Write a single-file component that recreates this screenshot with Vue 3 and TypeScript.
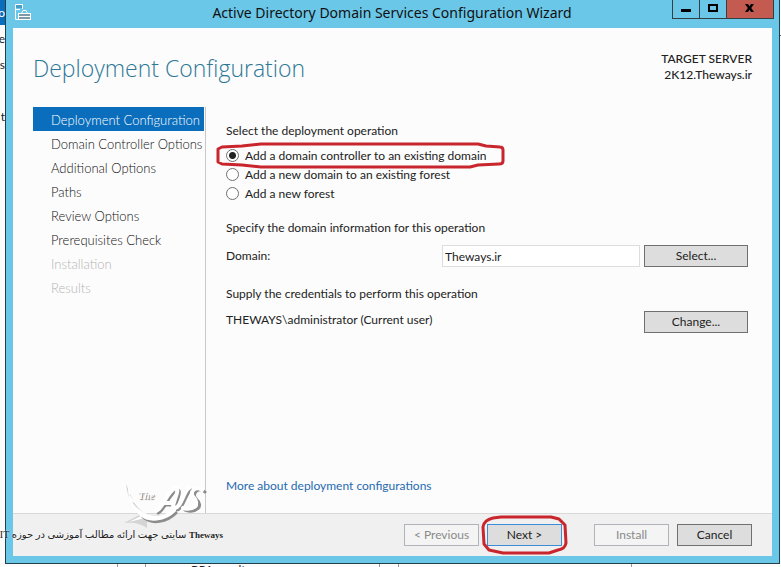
<script setup lang="ts">
import { ref } from 'vue'

interface Step {
  label: string
  disabled?: boolean
}

const steps: Step[] = [
  { label: 'Deployment Configuration' },
  { label: 'Domain Controller Options' },
  { label: 'Additional Options' },
  { label: 'Paths' },
  { label: 'Review Options' },
  { label: 'Prerequisites Check' },
  { label: 'Installation', disabled: true },
  { label: 'Results', disabled: true },
]
const current = ref(0)

const operations: string[] = [
  'Add a domain controller to an existing domain',
  'Add a new domain to an existing forest',
  'Add a new forest',
]
const operation = ref(0)
const domain = ref('Theways.ir')
</script>

<template>
  <div class="desktop">
    <div class="behind-left" aria-hidden="true">
      <span class="behind-active">ro</span>
      <span class="behind-a">ve</span>
      <span class="behind-b">s</span>
      <span class="behind-c">t</span>
    </div>
    <section class="window">
      <header class="titlebar">
        <svg class="app-icon" width="17" height="17" viewBox="0 0 17 17" fill="none" stroke="#fff">
          <path d="M1 1H7V4H1Z" fill="#4a9cc4" stroke="none" />
          <path d="M3 15.500H.5V.5H7.500V5M.5 5.500H5" />
          <rect x="3.500" y="9.500" width="12" height="6" fill="#7f9aa6" />
          <path d="M6.500 9.500L8 6.500H11L12.500 9.500M3.500 12.500H15.500" />
        </svg>
        <h1>Active Directory Domain Services Configuration Wizard</h1>
        <div class="caption-buttons">
          <button type="button" aria-label="Minimize">
            <svg width="10" height="12" viewBox="0 0 10 12"><path d="M0 9H10V12H0Z" /></svg>
          </button>
          <button type="button" aria-label="Maximize">
            <svg width="10" height="12" viewBox="0 0 10 12"><path fill-rule="evenodd" d="M0 4H10V12H0ZM2 6V10H8V6Z" /></svg>
          </button>
          <button type="button" class="close" aria-label="Close">
            <svg width="10" height="12" viewBox="0 0 10 12"><path d="M0 4H3L4.500 6.300L6 4H9L6.200 8L9 12H6L4.500 9.700L3 12H0L2.800 8Z" /></svg>
          </button>
        </div>
      </header>

      <div class="client">
        <div class="heading">
          <h2>Deployment Configuration</h2>
          <p class="target">TARGET SERVER<br />2K12.Theways.ir</p>
        </div>

        <div class="body">
          <nav class="steps">
            <button
              v-for="(step, i) in steps"
              :key="step.label"
              type="button"
              :disabled="step.disabled"
              :class="{ active: current === i }"
              @click="current = i"
            >
              {{ step.label }}
            </button>
          </nav>

          <main class="page">
            <fieldset>
              <legend>Select the deployment operation</legend>
              <label v-for="(op, i) in operations" :key="op" class="radio">
                <input v-model="operation" type="radio" name="operation" :value="i" />
                <span>{{ op }}</span>
                <svg v-if="i === 0" class="mark" width="289" height="28" viewBox="0 0 289 28" fill="none" stroke="#c9252c" stroke-width="3" stroke-linejoin="round">
                  <path d="M6 5L26 4L45 2H262L270 4L284 5Q287 5 287 8V19Q287 22 283 22L262 23L254 25H45L26 23L6 22L2 20V7Z" />
                </svg>
              </label>
            </fieldset>

            <p class="line">Specify the domain information for this operation</p>
            <div class="row domain-row">
              <label for="domain">Domain:</label>
              <input id="domain" v-model="domain" type="text" />
              <button type="button" class="btn wide">Select...</button>
            </div>

            <p class="line">Supply the credentials to perform this operation</p>
            <div class="row credentials-row">
              <span>THEWAYS\administrator (Current user)</span>
              <button type="button" class="btn wide">Change...</button>
            </div>

            <a class="more" href="#more">More about deployment configurations</a>
          </main>
        </div>

        <footer class="actions">
          <button type="button" class="btn" disabled>&lt; Previous</button>
          <div class="marked">
            <button type="button" class="btn primary">Next &gt;</button>
            <svg class="mark-next" width="87" height="40" viewBox="0 0 87 40" fill="none" stroke="#c9252c" stroke-width="3" stroke-linejoin="round">
              <path d="M12 3L20 2H70L78 4L84 10L85 28Q84 34 77 35L68 38H22L8 35L3 29L2 12Q3 5 12 3Z" />
            </svg>
          </div>
          <button type="button" class="btn install" disabled>Install</button>
          <button type="button" class="btn">Cancel</button>
        </footer>
      </div>
    </section>

    <div class="behind-right" aria-hidden="true"></div>
    <div class="behind-bottom" aria-hidden="true">
      <span class="cell gap"></span>
      <span class="cell">BPA results</span>
      <span class="cell gap"></span>
      <span class="cell"></span>
    </div>

    <div class="watermark">
      <svg width="84" height="50" viewBox="0 0 84 50" fill="none" stroke-linecap="round" stroke-linejoin="round">
        <path fill="#d4d4d4" d="M3 2C5 17 9 25 18 32L1 41C12 40 18 42 24 46L24 38C40 42 48 35 52 27C40 35 29 36 20 30C9 22 8 12 3 2Z" />
        <path fill="#fff" d="M5 4L8 13L6 12L12 21L9 20C13 26 18 29 22 31C33 37 44 33 50 29C43 40 28 39 22 36L6 40L18 34C8 27 5 17 5 4Z" />
        <g stroke="#8c8c8c" stroke-width="3" transform="translate(2 1)">
          <path d="M33 30C40 28 44 9 53 7C58 8 47 26 51 27C58 28 61 9 66 7M80 9C74 3 65 11 72 17C79 23 71 31 60 27M38 22H50M18 34C27 42 42 39 51 30" />
        </g>
        <g stroke="#fff" stroke-width="4">
          <path d="M33 29C40 27 44 8 53 6C58 7 47 25 51 26C58 27 61 8 66 6M79 8C73 3 65 10 71 16C77 22 70 29 60 26M38 21H50M18 32C27 40 42 37 51 28" />
        </g>
      </svg>
      <span class="the">The</span>
      <p dir="rtl"><bdi>Theways</bdi> سایتی جهت ارائه مطالب آموزشی در حوزه IT</p>
    </div>
  </div>
</template>

<style>
body {
  margin: 0;
}
</style>

<style scoped>
.desktop {
  position: relative;
  display: flex;
  min-height: 100vh;
  box-sizing: border-box;
  padding: 0 1px 3px 5px;
  overflow: hidden;
  background: #fcfcfc;
  color: #222;
  font: 12px/16px Lato, "Open Sans", sans-serif;
}
h1,
h2,
p,
fieldset {
  margin: 0;
  padding: 0;
  border: 0;
  font-weight: 400;
}
button,
input {
  font: inherit;
  color: inherit;
}
.window {
  display: flex;
  flex: 1;
  flex-direction: column;
  border: solid #243f4c;
  border-width: 0 1px 1px;
  padding: 0 7px 7px;
  background: #6bc7e8;
}
.titlebar {
  display: flex;
  align-items: flex-start;
  height: 28px;
}
.app-icon {
  flex: none;
  margin: 4px 0 0 2px;
}
.titlebar h1 {
  flex: 1;
  padding-left: 80px;
  font-family: "Noto Sans", sans-serif;
  font-size: 14px;
  line-height: 26px;
  text-align: center;
  color: #111;
}
.caption-buttons {
  display: flex;
  height: 18px;
  margin-right: -2px;
  border: solid #333f45;
  border-width: 0 1px 1px;
}
.caption-buttons button {
  display: flex;
  justify-content: center;
  width: 27px;
  padding: 0;
  border: 0;
  border-right: 1px solid #333f45;
  background: none;
}
.caption-buttons .close {
  width: 46px;
  border-right: 0;
  background: #c35b50;
}
.client {
  display: flex;
  flex: 1;
  flex-direction: column;
  background: #fcfcfc;
}
.heading {
  display: flex;
  justify-content: space-between;
  padding: 23px 20px 0;
}
.heading h2 {
  font-family: "Open Sans", sans-serif;
  font-size: 23px;
  line-height: 34px;
  font-weight: 300;
  color: #2e7897;
}
.target {
  text-align: right;
  font-weight: 500;
}
.body {
  display: flex;
  flex: 1;
  padding: 22px 20px 0;
}
.steps {
  display: flex;
  flex-direction: column;
  flex: none;
  width: 172px;
  border-right: 1px solid #c8c8c8;
}
.steps button {
  height: 24px;
  margin-right: 1px;
  padding: 2px 0 0 18px;
  border: 0;
  background: none;
  text-align: left;
  white-space: nowrap;
  font-size: 13px;
  line-height: 18px;
  font-weight: 300;
  color: #111;
}
.steps button.active {
  background: #0a6ebd;
  color: #fff;
}
.steps button:disabled {
  color: #b4b4b4;
}
.page {
  display: flex;
  flex: 1;
  flex-direction: column;
  padding: 16px 4px 19px 20px;
}
legend {
  padding: 0;
  margin-bottom: 7px;
}
.radio {
  position: relative;
  display: flex;
  align-items: center;
  gap: 6px;
  height: 19px;
}
.radio input {
  appearance: none;
  width: 13px;
  height: 13px;
  margin: 0;
  border: 1px solid #707070;
  border-radius: 50%;
  background: #fff;
}
.radio input:checked {
  background: radial-gradient(circle, #222 0 3px, #fff 4px);
}
.mark {
  position: absolute;
  left: -10px;
  top: -4px;
}
.line {
  margin-top: 17px;
}
.row {
  display: flex;
  align-items: center;
  gap: 4px;
}
.domain-row {
  margin-top: 9px;
}
.domain-row label {
  flex: 1;
}
.domain-row input {
  box-sizing: border-box;
  width: 198px;
  height: 22px;
  padding: 0 2px;
  border: 1px solid #ddd;
  background: #fff;
}
.domain-row + .line {
  margin-top: 19px;
}
.credentials-row {
  align-items: flex-start;
  justify-content: space-between;
  margin-top: 9px;
}
.credentials-row span {
  padding-top: 1px;
}
.btn {
  box-sizing: border-box;
  width: 75px;
  height: 22px;
  padding: 0;
  border: 1px solid #707070;
  background: #ddd;
}
.btn.wide {
  width: 104px;
}
.btn:disabled {
  border-color: #b0b4b8;
  background: #f4f4f4;
  color: #8a8a8a;
}
.btn.primary {
  border-color: #3c8cd8;
}
.more {
  align-self: flex-start;
  margin-top: auto;
  color: #1f6ab0;
  text-decoration: none;
}
.actions {
  display: flex;
  justify-content: flex-end;
  gap: 8px;
  padding: 10px 20px;
  border-top: 1px solid #d8d8d8;
  background: #f0f0f0;
}
.marked {
  position: relative;
  display: flex;
}
.mark-next {
  position: absolute;
  left: -6px;
  top: -9px;
}
.install {
  margin-left: 24px;
}
.behind-left {
  position: absolute;
  left: 0;
  top: 0;
  width: 5px;
  overflow: hidden;
}
.behind-left span {
  display: flex;
  justify-content: flex-end;
}
.behind-active {
  height: 25px;
  background: #0a6ebd;
  color: #fff;
  line-height: 26px;
}
.behind-a {
  padding-top: 6px;
}
.behind-b {
  padding-top: 10px;
}
.behind-c {
  padding-top: 36px;
}
.behind-right {
  position: absolute;
  right: 0;
  top: 35px;
  width: 1px;
  height: 1px;
  background: #666;
}
.behind-bottom {
  position: absolute;
  left: 117px;
  right: 149px;
  bottom: 0;
  display: flex;
  height: 3px;
  overflow: hidden;
  border-right: 1px solid #999;
}
.cell {
  flex: 1;
  padding-left: 45px;
  border-left: 1px solid #999;
  line-height: 12px;
}
.cell.gap {
  flex: 0 0 18px;
  padding-left: 0;
}
.cell.gap:first-child {
  flex-basis: 27px;
}
.watermark {
  position: absolute;
  left: 0;
  top: 482px;
  width: 223px;
}
.watermark svg {
  display: block;
  margin-left: 123px;
}
.watermark .the {
  position: absolute;
  left: 138px;
  top: 8px;
  font: italic bold 10px/12px "Liberation Serif", serif;
  color: #fff;
  text-shadow: 1px 1px 1px #777;
}
.watermark p {
  position: absolute;
  right: 0;
  top: 43px;
  white-space: nowrap;
  font: 10px/20px "Liberation Serif", "DejaVu Sans", serif;
  color: #222;
  text-shadow: 0 0 2px #fff;
}
.watermark bdi {
  font-size: 9px;
  font-weight: 700;
}
</style>
